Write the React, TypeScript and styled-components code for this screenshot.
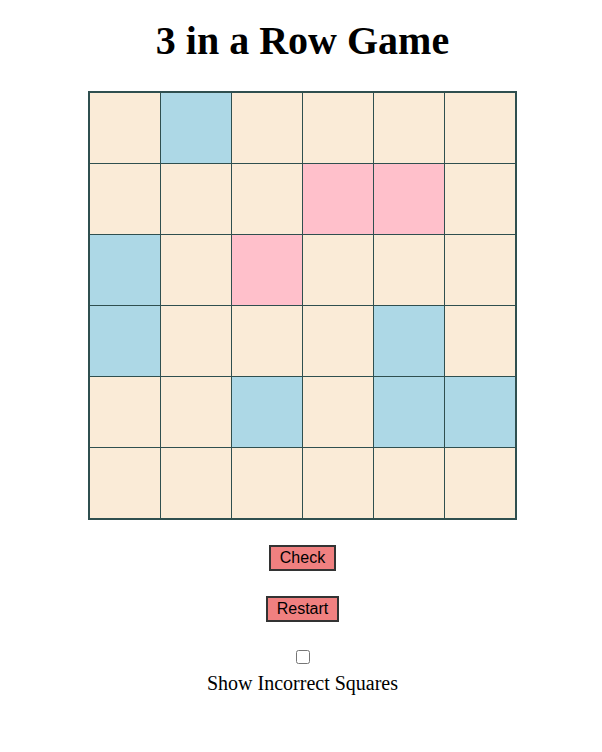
import React from "react";
import styled, { createGlobalStyle } from "styled-components";

const Global = createGlobalStyle`
  body {
    margin: 8px;
    font-family: "Liberation Serif", "Times New Roman", serif;
    background: #ffffff;
  }
`;

const Page = styled.div`
  display: flex;
  flex-direction: column;
  align-items: center;
  padding-left: 3px;
`;

const Title = styled.h1`
  font-family: "Liberation Serif", "Times New Roman", serif;
  font-size: 40px;
  font-weight: bold;
  margin: 10px 0 27px;
  line-height: 46px;
`;

const Board = styled.div`
  display: grid;
  grid-template-columns: repeat(6, 70px);
  grid-auto-rows: 70px;
  gap: 1px;
  background: #2f4f4f;
  border: 2px solid #2f4f4f;
`;

type Tone = "e" | "b" | "p";

const colors: Record<Tone, string> = {
  e: "#faebd7",
  b: "#add8e6",
  p: "#ffc0cb",
};

const Cell = styled.div<{ $tone: Tone }>`
  background: ${(p) => colors[p.$tone]};
`;

const Button = styled.button`
  font-family: "Liberation Sans", Arial, sans-serif;
  font-size: 16px;
  line-height: 18px;
  background: #f08080;
  color: #000;
  border: 2px solid #333;
  padding: 2px 9px;
  height: 26px;
  margin-top: 25px;
  cursor: pointer;
`;

const CheckWrap = styled.label`
  display: flex;
  flex-direction: column;
  align-items: center;
  margin-top: 28px;
  font-family: "Liberation Serif", "Times New Roman", serif;
  font-size: 20px;
`;

const Box = styled.input`
  width: 14px;
  height: 14px;
  margin: 0 0 8px;
`;

const layout: Tone[][] = [
  ["e", "b", "e", "e", "e", "e"],
  ["e", "e", "e", "p", "p", "e"],
  ["b", "e", "p", "e", "e", "e"],
  ["b", "e", "e", "e", "b", "e"],
  ["e", "e", "b", "e", "b", "b"],
  ["e", "e", "e", "e", "e", "e"],
];

export default function App() {
  return (
    <Page>
      <Global />
      <Title>3 in a Row Game</Title>
      <Board>
        {layout.flat().map((t, i) => (
          <Cell key={i} $tone={t} />
        ))}
      </Board>
      <Button>Check</Button>
      <Button>Restart</Button>
      <CheckWrap>
        <Box type="checkbox" />
        Show Incorrect Squares
      </CheckWrap>
    </Page>
  );
}
